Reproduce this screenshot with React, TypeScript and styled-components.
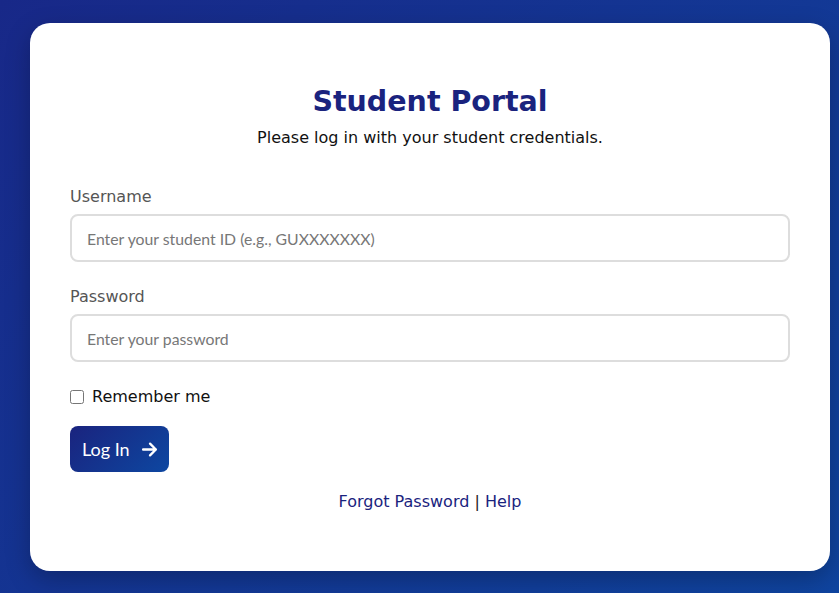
import styled, { createGlobalStyle } from "styled-components";

const GlobalStyle = createGlobalStyle`
  html, body {
    margin: 0;
    padding: 0;
  }
  body {
    font-family: "DejaVu Sans", sans-serif;
    background: linear-gradient(135deg, #182888, #0f449f);
    min-height: 593px;
  }
`;

const Page = styled.div`
  min-height: 593px;
  padding: 23px 9px 22px 30px;
  box-sizing: border-box;
`;

const Card = styled.div`
  background: #fff;
  border-radius: 20px;
  padding: 40px;
  box-shadow: 0 8px 24px rgba(0, 0, 0, 0.25);
  min-height: 548px;
  box-sizing: border-box;
`;

const Header = styled.div`
  text-align: center;
  margin-bottom: 40px;
`;

const Title = styled.h1`
  color: #1a237e;
  font-size: 28.5px;
  margin: 22px 0 10px;
`;

const Subtitle = styled.p`
  margin: 0;
  font-size: 16px;
  color: #111;
`;

const Field = styled.div`
  margin-bottom: 25px;
`;

const Label = styled.label`
  display: block;
  color: #555;
  font-size: 16px;
  margin-bottom: 8px;
`;

const Input = styled.input`
  width: 100%;
  box-sizing: border-box;
  height: 48px;
  padding: 0 15px;
  border: 2px solid #ddd;
  border-radius: 8px;
  font-family: Lato, sans-serif;
  font-size: 15.8px;
  outline: none;
  &::placeholder {
    color: #777;
  }
`;

const CheckRow = styled.label`
  display: flex;
  align-items: center;
  gap: 8px;
  font-size: 16px;
  color: #111;
  margin-bottom: 20px;
`;

const Check = styled.input`
  margin: 0;
  width: 14px;
  height: 14px;
`;

const Button = styled.button`
  display: inline-flex;
  align-items: center;
  gap: 11px;
  height: 46px;
  padding: 0 11px 0 12px;
  border: none;
  border-radius: 8px;
  background: linear-gradient(135deg, #1a237e, #0d47a1);
  color: #fff;
  font-family: Lato, sans-serif;
  font-size: 18px;
  cursor: pointer;
`;

const Footer = styled.div`
  text-align: center;
  margin-top: 20px;
  font-size: 16px;
  color: #222;
`;

const FooterLink = styled.a`
  color: #1a237e;
  text-decoration: none;
`;

export default function App() {
  return (
    <>
      <GlobalStyle />
      <Page>
        <Card>
          <Header>
            <Title>Student Portal</Title>
            <Subtitle>Please log in with your student credentials.</Subtitle>
          </Header>
          <Field>
            <Label>Username</Label>
            <Input placeholder="Enter your student ID (e.g., GUXXXXXXX)" />
          </Field>
          <Field>
            <Label>Password</Label>
            <Input type="password" placeholder="Enter your password" />
          </Field>
          <CheckRow>
            <Check type="checkbox" />
            Remember me
          </CheckRow>
          <Button>
            Log In
            <svg width="17" height="17" viewBox="0 0 16 16" fill="none" stroke="#fff" strokeWidth="2.2" strokeLinecap="round" strokeLinejoin="round">
              <path d="M2 8h12M8.5 2.5L14 8l-5.5 5.5" />
            </svg>
          </Button>
          <Footer>
            <FooterLink href="#">Forgot Password</FooterLink> |{" "}
            <FooterLink href="#">Help</FooterLink>
          </Footer>
        </Card>
      </Page>
    </>
  );
}
